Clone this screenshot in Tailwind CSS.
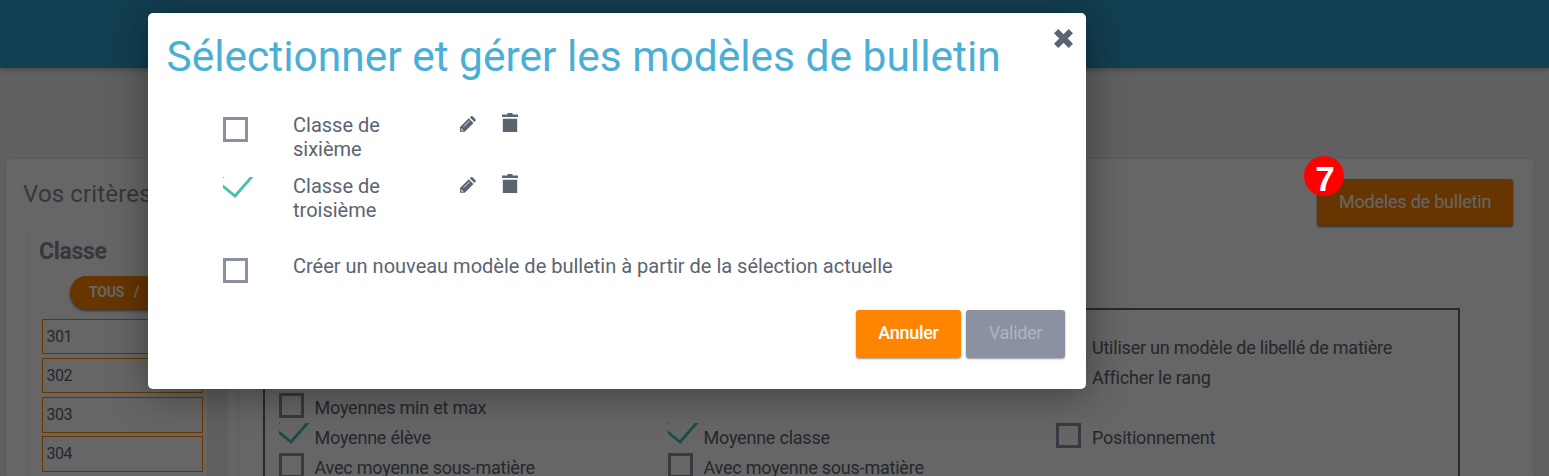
<!DOCTYPE html>
<html lang="fr">
<head>
<meta charset="utf-8">
<title>Modèles de bulletin</title>
<script src="https://cdn.jsdelivr.net/npm/@tailwindcss/browser@4"></script>
</head>
<body class="relative h-[476px] overflow-hidden bg-[#f0f1f4] font-[Roboto,sans-serif] text-[#5b6472]">
<svg class="hidden">
  <symbol id="check" viewBox="0 0 31 22"><path d="M-1 8.5L12 19L29.5 -1" fill="none" stroke="#46bfaf" stroke-width="2.8"/><path d="M0 0h1v1H0z" fill="#46bfaf"/></symbol>
  <symbol id="pencil" viewBox="0 0 16 16"><path d="M0 15.800V11L8.800 2.200L13.500 6.900L4.800 15.800Z M9.800 1.300L11 .3Q12 -.2 13 .7L15.300 3Q16 4 15.300 5L14.400 5.900Z" fill="currentColor"/><path d="M3.700 10.600L9.600 4.700M1.500 12.500V14.200H3.300" stroke="#fff" stroke-width=".8" fill="none"/></symbol>
  <symbol id="trash" viewBox="0 0 16 19"><path d="M5.500 0h5v1.500H16V4H0V1.500h5.500zM.8 5.700h14.400V19H.8z" fill="currentColor"/></symbol>
</svg>

<header class="relative h-[68px] bg-[#2d9fca] shadow-[0_1px_6px_rgba(0,0,0,0.35)]"></header>

<main class="ml-1.5 mt-[91px] h-[317px] w-[1527px] overflow-hidden rounded-t bg-white shadow-[0_0_3px_rgba(0,0,0,0.12)]">
  <div class="flex h-[70px] justify-between pl-[17px] pr-5 pt-5">
    <h1 class="-mt-px text-[24px] leading-8 tracking-[0.15px] text-[#868c96]">Vos critères</h1>
    <button class="h-[47px] w-[196px] rounded-[3px] bg-[#ff8500] pb-0.5 text-[18px] tracking-[-0.2px] text-white shadow-[0_1px_2px_rgba(0,0,0,0.6)]">Modeles de bulletin</button>
  </div>
  <div class="flex">
    <aside class="ml-[22px] h-[247px] w-[211px] border-x border-[#ececec] pl-[10px]">
      <h2 class="mt-[7px] text-[23px] font-bold leading-8 tracking-[-0.3px] text-[#868c96]">Classe</h2>
      <div class="ml-[31px] mt-2 h-[33px] w-[110px] rounded-full bg-[#ff8500] pl-[19px] text-[14px] font-bold leading-[33px] tracking-[-0.2px] text-white shadow-[0_2px_3px_rgba(0,0,0,0.5)]">TOUS &nbsp;&nbsp;/</div>
      <div class="flex">
        <ul class="ml-[3px] mt-[10px] w-[161px] space-y-1 text-[16px] leading-[33px] tracking-[-0.5px]">
          <li class="h-[35px] border border-[#ff8500] pl-[3.500px]">301</li>
          <li class="h-[35px] border border-[#ff8500] pl-[3.500px]">302</li>
          <li class="h-[36px] border border-[#ff8500] pl-[3.500px]">303</li>
          <li class="-mt-px h-[36px] border border-[#ff8500] pl-[3.500px]">304</li>
        </ul>
        <div class="ml-1 h-[167px] w-[21px] bg-[#f0f0f0]"></div>
      </div>
    </aside>
    <section class="ml-[24px] mt-[79px] h-[168px] w-[1197px] border-2 border-b-0 border-[#666] pl-[14px] pt-[23px] text-[18px] tracking-[-0.22px]">
      <div class="grid grid-cols-[389px_388px_1fr] auto-rows-[30px] leading-[30px] text-[#5b6472]">
        <span></span><span></span><span class="pl-[36px]">Utiliser un modèle de libellé de matière</span>
        <span></span><span></span><span class="pl-[36px]">Afficher le rang</span>
        <label class="flex"><i class="mr-[10.500px] size-[25px] border-[3px] border-[#8b91a0]"></i>Moyennes min et max</label><span></span><span></span>
        <label class="flex"><svg class="mr-[4.500px] h-[22px] w-[31px]"><use href="#check"/></svg>Moyenne élève</label>
        <label class="flex"><svg class="mr-[4.500px] h-[22px] w-[31px]"><use href="#check"/></svg>Moyenne classe</label>
        <label class="flex"><i class="mr-[11px] size-[25px] border-[3px] border-[#8b91a0]"></i>Positionnement</label>
        <label class="flex"><i class="mr-[10.500px] size-[25px] border-[3px] border-[#8b91a0]"></i>Avec moyenne sous-matière</label>
        <label class="flex"><i class="mr-[10.500px] size-[25px] border-[3px] border-[#8b91a0]"></i>Avec moyenne sous-matière</label>
      </div>
    </section>
  </div>
</main>

<div class="absolute inset-0 bg-black/60"></div>

<div class="absolute left-[1304px] top-[156px] flex size-10 items-center justify-center rounded-full bg-[#ff0000] pt-1 pl-0.5 font-['Liberation_Sans',sans-serif] text-[35px] font-bold leading-none text-white">7</div>

<div role="dialog" class="absolute left-[148px] top-[13px] h-[376px] w-[938px] rounded-[5px] bg-white shadow-[0_5px_40px_rgba(0,0,0,0.4)]">
  <div class="flex justify-between pl-[18.500px] pr-3">
    <h2 class="mt-[18px] text-[42.500px] leading-[52px] tracking-[-0.01px] text-[#4bafd5]">Sélectionner et gérer les modèles de bulletin</h2>
    <svg class="mt-[15px] h-[21px] w-[21px]" viewBox="0 0 20 20"><path d="M3 3L17 17M17 3L3 17" stroke="#5b6472" stroke-width="5.800"/></svg>
  </div>
  <div class="ml-[75px] mt-[30px] text-[20px] leading-6">
    <div class="flex h-[61px]">
      <i class="mt-1 size-[25px] border-[3px] border-[#8b91a0]"></i>
      <p class="ml-[45px] w-[120px]">Classe de sixième</p>
      <svg class="ml-[47px] mt-[3px] size-4"><use href="#pencil"/></svg>
      <svg class="ml-[26px] h-[19px] w-4"><use href="#trash"/></svg>
    </div>
    <div class="flex h-[61px]">
      <svg class="mt-[3px] h-[22px] w-[31px]"><use href="#check"/></svg>
      <p class="ml-[39px] w-[120px]">Classe de troisième</p>
      <svg class="ml-[47px] mt-[3px] size-4"><use href="#pencil"/></svg>
      <svg class="ml-[26px] h-[19px] w-4"><use href="#trash"/></svg>
    </div>
    <div class="flex h-[50px] pt-[19px]">
      <i class="mt-1 size-[25px] border-[3px] border-[#8b91a0]"></i>
      <p class="ml-[45px]">Créer un nouveau modèle de bulletin à partir de la sélection actuelle</p>
    </div>
  </div>
  <div class="mr-[21px] mt-[25px] flex justify-end gap-[5px] text-[18px] font-medium tracking-[-0.3px]">
    <button class="h-12 w-[105px] rounded-[3px] bg-[#ff8500] pb-1 text-white shadow-[0_1px_2px_rgba(0,0,0,0.4)]">Annuler</button>
    <button class="h-12 w-[99px] rounded-[3px] bg-[#8b91a0] pb-1 font-normal text-[#afb4be] shadow-[0_1px_2px_rgba(0,0,0,0.4)]">Valider</button>
  </div>
</div>
</body>
</html>
